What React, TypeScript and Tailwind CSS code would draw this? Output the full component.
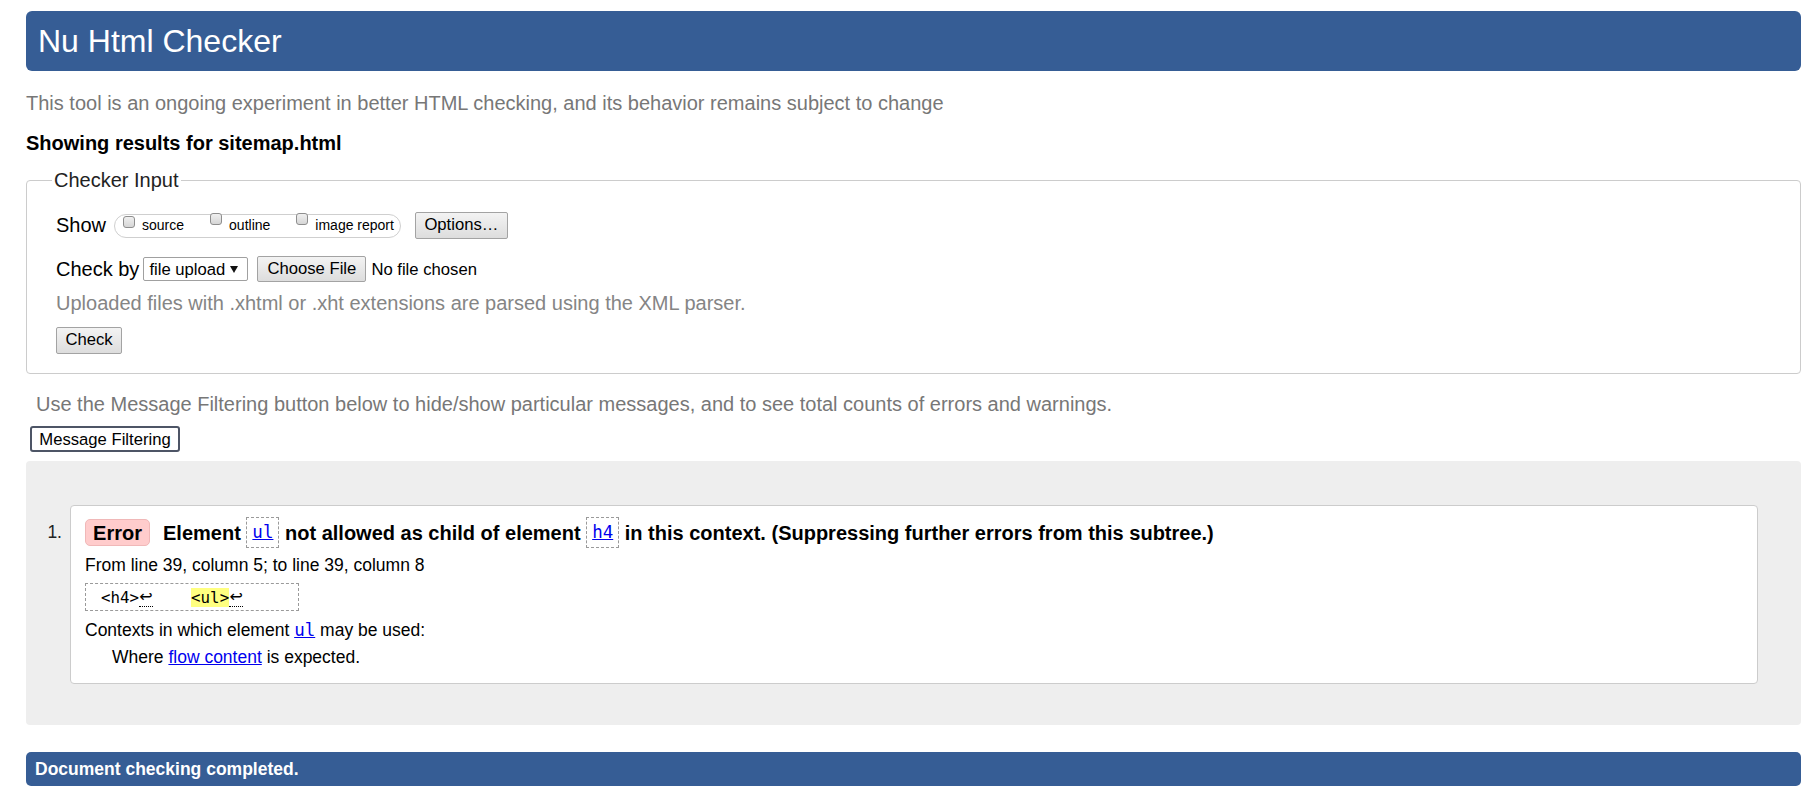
import React from "react";

function Checkbox() {
  return (
    <span className="mb-[8px] inline-block h-[12px] w-[12px] shrink-0 rounded-[3px] border border-[#8e8e8e] bg-gradient-to-b from-[#f0f0f0] to-[#d6d6d6]" />
  );
}

function Btn({ children, className = "" }: { children: React.ReactNode; className?: string }) {
  return (
    <span
      className={
        "inline-flex items-center justify-center rounded-[2px] border border-[#a3a3a3] bg-gradient-to-b from-[#f3f3f3] to-[#dddddd] text-[16.67px] leading-none text-black " +
        className
      }
    >
      {children}
    </span>
  );
}

function CodeBox({ children }: { children: React.ReactNode }) {
  return (
    <span className="inline-block h-[31px] border border-dashed border-[#9a9a9a] px-[5px] font-['DejaVu_Sans_Mono',monospace] text-[17.5px] font-normal leading-[29px]">
      <a className="text-[#0000ee] underline">{children}</a>
    </span>
  );
}

function Ret() {
  return (
    <span className="inline-block w-[14px] border-b border-dotted border-black text-center font-['DejaVu_Sans',sans-serif] text-[16px] leading-[18px]">
      ↩
    </span>
  );
}

export default function App() {
  return (
    <div className="min-h-screen bg-white pl-[26px] pr-[13px] pt-[11px] font-['Liberation_Sans',Arial,sans-serif] text-[20px] text-black">
      <h1 className="flex h-[60px] items-center rounded-[6px] bg-[#365d95] px-[12px] text-[32px] font-normal leading-none text-white">
        Nu Html Checker
      </h1>

      <p className="mt-[21px] leading-[23px] text-[#777]">
        This tool is an ongoing experiment in better HTML checking, and its behavior remains subject to change
      </p>

      <p className="mt-[17px] font-bold leading-[23px]">Showing results for sitemap.html</p>

      <fieldset className="mt-[14px] rounded-[4px] border border-[#cccccc] pb-[19px] pl-[29px]">
        <legend className="-ml-[4px] px-[2px] leading-[23px] text-[#222]">Checker Input</legend>

        <div className="mt-[20px] flex items-center">
          <span className="leading-[23px]">Show</span>
          <span className="ml-[8px] flex h-[24px] items-center rounded-full border border-[#cfcfcf] pl-[8px] pr-[6px] text-[14px]">
            <Checkbox />
            <span className="ml-[7px]">source</span>
            <span className="ml-[26px]">
              <Checkbox />
            </span>
            <span className="ml-[7px]">outline</span>
            <span className="ml-[26px]">
              <Checkbox />
            </span>
            <span className="ml-[7px]">image report</span>
          </span>
          <Btn className="ml-[14px] h-[27px] w-[93px]">Options…</Btn>
        </div>

        <div className="mt-[17px] flex items-center">
          <span className="leading-[23px]">Check by</span>
          <span className="ml-[4px] flex h-[24px] w-[105px] items-center justify-between rounded-[2px] border border-[#a0a0a0] bg-white pl-[5px] pr-[9px] text-[16.67px]">
            <span>file upload</span>
            <svg width="8" height="7" viewBox="0 0 8 7">
              <path d="M0 0 H8 L4 7 Z" fill="#111" />
            </svg>
          </span>
          <Btn className="ml-[9px] h-[26px] w-[109px]">Choose File</Btn>
          <span className="ml-[5px] text-[16.67px]">No file chosen</span>
        </div>

        <p className="mt-[10px] leading-[23px] text-[#858585]">
          Uploaded files with .xhtml or .xht extensions are parsed using the XML parser.
        </p>

        <Btn className="mt-[12px] h-[27px] w-[66px]">Check</Btn>
      </fieldset>

      <p className="ml-[10px] mt-[19px] leading-[23px] text-[#777]">
        Use the Message Filtering button below to hide/show particular messages, and to see total counts of errors and warnings.
      </p>

      <div className="ml-[4px] mt-[10px] flex h-[26px] w-[150px] items-center justify-center rounded-[3px] border-2 border-[#4d5566] bg-white text-[16.67px]">
        Message Filtering
      </div>

      <div className="mt-[9px] flex rounded-[4px] bg-[#eeeeee] pb-[41px] pr-[43px] pt-[44px]">
        <div className="w-[44px] shrink-0 pr-[8px] pt-[17px] text-right text-[17.5px] leading-[20px] text-[#222]">1.</div>
        <div className="flex-1 rounded-[4px] border border-[#cccccc] bg-white pb-[16px] pl-[14px] pt-[11px]">
          <div className="flex h-[31px] items-center whitespace-pre font-bold">
            <span className="flex h-[27px] w-[65px] items-center justify-center rounded-[5px] border border-[#f0b8b8] bg-[#ffcccc]">
              Error
            </span>
            <span className="ml-[13px]">Element </span>
            <CodeBox>ul</CodeBox>
            <span> not allowed as child of element </span>
            <CodeBox>h4</CodeBox>
            <span> in this context. (Suppressing further errors from this subtree.)</span>
          </div>

          <p className="mt-[7px] text-[17.5px] leading-[20px]">From line 39, column 5; to line 39, column 8</p>

          <div className="mt-[8px] flex h-[28px] w-[214px] items-center whitespace-pre border border-dashed border-[#9a9a9a] pl-[15px] font-['DejaVu_Sans_Mono',monospace] text-[15.8px] leading-[19px]">
            <span>{"<h4>"}</span>
            <Ret />
            <span>{"    "}</span>
            <span className="bg-[#ffff80]">{"<ul>"}</span>
            <Ret />
          </div>

          <p className="mt-[9px] text-[17.5px] leading-[20px]">
            Contexts in which element{" "}
            <a className="font-['DejaVu_Sans_Mono',monospace] text-[#0000ee] underline">ul</a> may be used:
          </p>
          <p className="ml-[27px] mt-[7px] text-[17.5px] leading-[20px]">
            Where <a className="text-[#0000ee] underline">flow content</a> is expected.
          </p>
        </div>
      </div>

      <div className="mt-[27px] flex h-[34px] items-center rounded-[5px] bg-[#365d95] pl-[9px] text-[17.5px] font-bold text-white">
        Document checking completed.
      </div>
    </div>
  );
}
